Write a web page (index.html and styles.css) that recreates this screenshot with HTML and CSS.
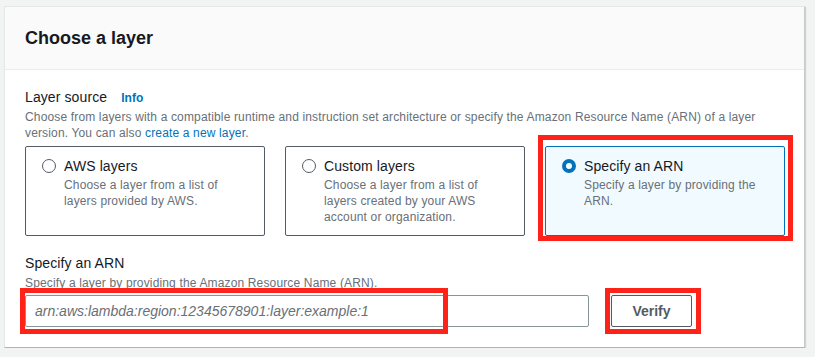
FILE: index.html
```html
<!DOCTYPE html>
<html lang="en">
<head>
<meta charset="UTF-8">
<meta name="viewport" content="width=device-width, initial-scale=1.0">
<title>Choose a layer</title>
<link rel="stylesheet" href="styles.css">
</head>
<body>

<div class="panel">
  <div class="panel-header">
    <h2>Choose a layer</h2>
  </div>

  <div class="panel-body">
    <div class="field">
      <div class="field-label">
        Layer source
        <a href="#" class="info">Info</a>
      </div>
      <div class="field-desc">
        Choose from layers with a compatible runtime and instruction set architecture or specify the Amazon Resource Name (ARN) of a layer version. You can also <a href="#">create a new layer</a>.
      </div>

      <div class="tiles">
        <label class="tile">
          <span class="radio"></span>
          <span class="tile-text">
            <span class="tile-title">AWS layers</span>
            <span class="tile-desc">Choose a layer from a list of layers provided by AWS.</span>
          </span>
        </label>
        <label class="tile">
          <span class="radio"></span>
          <span class="tile-text">
            <span class="tile-title">Custom layers</span>
            <span class="tile-desc">Choose a layer from a list of layers created by your AWS account or organization.</span>
          </span>
        </label>
        <label class="tile selected">
          <span class="radio checked"></span>
          <span class="tile-text">
            <span class="tile-title">Specify an ARN</span>
            <span class="tile-desc">Specify a layer by providing the ARN.</span>
          </span>
          <span class="mark mark-tile"></span>
        </label>
      </div>
    </div>

    <div class="field arn-field">
      <div class="field-label">Specify an ARN</div>
      <div class="field-desc">Specify a layer by providing the Amazon Resource Name (ARN).</div>
      <div class="arn-row">
        <div class="input-wrap">
          <input type="text" placeholder="arn:aws:lambda:region:12345678901:layer:example:1">
          <span class="mark mark-input"></span>
        </div>
        <div class="button-wrap">
          <button>Verify</button>
          <span class="mark mark-button"></span>
        </div>
      </div>
    </div>
  </div>
</div>

</body>
</html>
```

FILE: styles.css
```css
* {
  box-sizing: border-box;
}
body {
  margin: 0;
  background-color: #f2f3f3;
  font-family: "Liberation Sans", Arial, sans-serif;
  color: #16191f;
}
a {
  color: #0073bb;
  text-decoration: none;
}
.panel {
  margin: 6px 10px 0 4px;
  background: #ffffff;
  border: 1px solid #e4e7e7;
  border-right-color: #c6cccc;
  border-bottom-color: #aab7b8;
  box-shadow: 1px 1px 1px rgba(0, 28, 36, 0.15);
}
.panel-header {
  background: #fafafa;
  border-bottom: 1px solid #eaeded;
  padding: 19px 20px 19px 20px;
}
.panel-header h2 {
  margin: 0;
  font-size: 18px;
  line-height: 24px;
  font-weight: bold;
}
.panel-body {
  padding: 17px 19px 20px 20px;
}
.field-label {
  font-size: 14px;
  line-height: 20px;
  letter-spacing: 0.1px;
}
.field-label .info {
  font-size: 12px;
  font-weight: bold;
  margin-left: 10px;
}
.field-desc {
  font-size: 12px;
  line-height: 16px;
  letter-spacing: 0.15px;
  color: #687078;
  margin-top: 1px;
}
.tiles {
  display: grid;
  grid-template-columns: repeat(3, 240px);
  gap: 20px;
  margin-top: 5px;
}
.tile {
  position: relative;
  display: flex;
  gap: 8px;
  height: 90px;
  padding: 10px 22px 0 16px;
  border: 1px solid #545b64;
  border-radius: 2px;
  cursor: pointer;
}
.tile.selected {
  background: #f1faff;
  border-color: #0073bb;
}
.radio {
  flex: none;
  width: 14px;
  height: 14px;
  margin-top: 2px;
  border: 1px solid #545b64;
  border-radius: 50%;
  background: #ffffff;
}
.radio.checked {
  border: 4px solid #0073bb;
}
.tile-text {
  display: flex;
  flex-direction: column;
}
.tile-title {
  font-size: 14px;
  line-height: 18px;
  letter-spacing: 0.1px;
}
.tile-desc {
  font-size: 12px;
  line-height: 16px;
  letter-spacing: 0.15px;
  color: #687078;
  margin-top: 2px;
}
.arn-field {
  margin-top: 17px;
}
.arn-field .field-desc {
  margin-top: 2px;
}
.arn-row {
  display: flex;
  gap: 22px;
  margin-top: 4px;
}
.input-wrap, .button-wrap {
  position: relative;
}
.arn-row input {
  display: block;
  width: 564px;
  height: 32px;
  padding: 0 9px;
  border: 1px solid #879596;
  border-radius: 2px;
  font-family: inherit;
  font-size: 14px;
  color: #16191f;
}
.arn-row input::placeholder {
  font-style: italic;
  color: #687078;
}
.arn-row button {
  display: block;
  width: 81px;
  height: 32px;
  background: #ffffff;
  border: 1px solid #545b64;
  border-radius: 2px;
  font-family: inherit;
  font-size: 14px;
  font-weight: bold;
  color: #545b64;
  cursor: pointer;
}
.mark {
  position: absolute;
  border: 5px solid #ff2218;
  pointer-events: none;
}
.mark-tile {
  left: -8px;
  right: -9px;
  top: -12px;
  bottom: -6px;
}
.mark-input {
  left: -5px;
  top: -7px;
  width: 428px;
  bottom: -7px;
}
.mark-button {
  left: -6px;
  right: -9px;
  top: -7px;
  bottom: -7px;
}
```
